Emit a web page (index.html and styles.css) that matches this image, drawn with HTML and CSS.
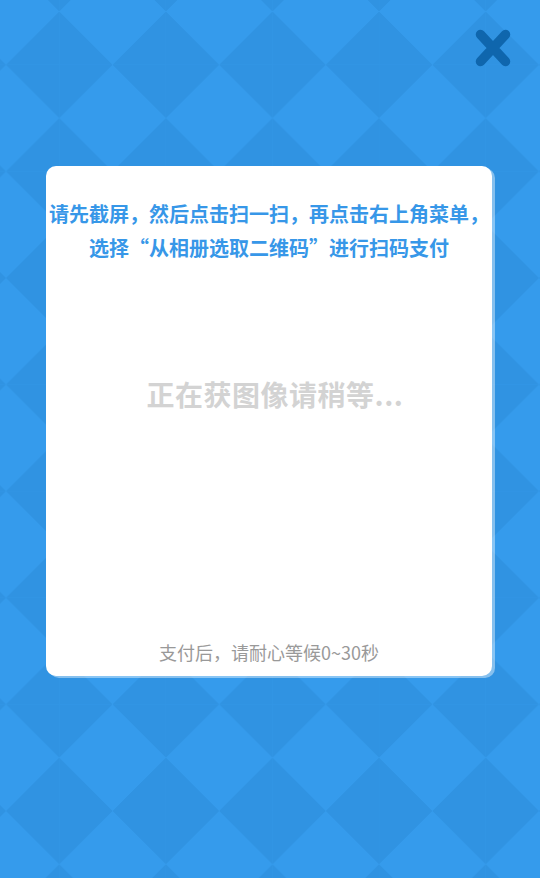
FILE: index.html
```html
<!DOCTYPE html>
<html lang="zh-CN">
<head>
<meta charset="utf-8">
<title>扫码支付</title>
<link rel="stylesheet" href="styles.css">
</head>
<body>
<div class="page">
  <div class="topbar">
    <svg class="close" width="36" height="38" viewBox="0 0 36 38" aria-label="关闭">
      <path d="M5.5 5.5 L30.5 32.5 M30.5 5.5 L5.5 32.5" stroke="#0f66ad" stroke-width="9.5" stroke-linecap="round" fill="none"/>
    </svg>
  </div>
  <div class="card">
    <p class="tip">请先截屏，然后点击扫一扫，再点击右上角菜单，<br>选择“从相册选取二维码”进行扫码支付</p>
    <p class="loading">正在获图像请稍等...</p>
    <p class="wait">支付后，请耐心等候0~30秒</p>
  </div>
</div>
</body>
</html>
```

FILE: styles.css
```css
html, body {
  margin: 0;
  padding: 0;
}
body {
  width: 540px;
  height: 878px;
  overflow: hidden;
  font-family: "Noto Sans CJK SC", "Noto Sans", sans-serif;
  background-color: #359bec;
  background-image:
    linear-gradient(45deg, #3093e2 25%, transparent 25%),
    linear-gradient(135deg, #3093e2 25%, transparent 25%),
    linear-gradient(225deg, #3093e2 25%, transparent 25%),
    linear-gradient(315deg, #3093e2 25%, transparent 25%);
  background-size: 106.6px 106.6px;
  background-position: -47.3px -41.8px;
}
.page {
  display: flex;
  flex-direction: column;
  padding-top: 29px;
}
.topbar {
  display: flex;
  justify-content: flex-end;
  padding-right: 29px;
}
.close {
  display: block;
}
.card {
  margin-top: 99px;
  margin-left: 46px;
  width: 446px;
  height: 510px;
  box-sizing: border-box;
  background: #fff;
  border-radius: 10px;
  box-shadow: 3px 2px 0 rgba(255, 255, 255, 0.42);
  display: flex;
  flex-direction: column;
  align-items: center;
  padding: 31px 0 14px;
}
.tip {
  margin: 0;
  font-size: 20px;
  line-height: 34px;
  font-weight: 700;
  color: #3797e8;
  text-align: center;
  white-space: nowrap;
}
.loading {
  margin: 109px 0 0 12px;
  font-size: 28px;
  line-height: 40px;
  font-weight: 700;
  letter-spacing: 0.5px;
  color: #d3d3d3;
  white-space: nowrap;
}
.wait {
  margin: auto 0 0;
  font-size: 18px;
  line-height: 20px;
  color: #999;
  white-space: nowrap;
}
```
